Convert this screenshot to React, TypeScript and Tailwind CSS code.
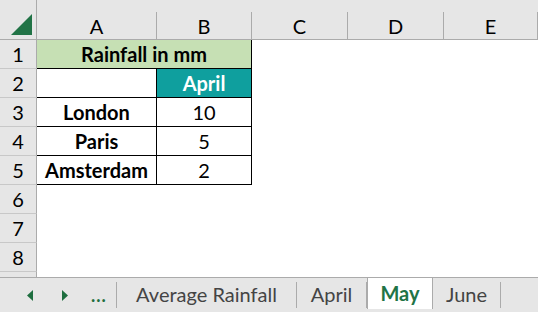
const cols = ["A", "B", "C", "D", "E"];
const colWidths = ["w-[120px]", "w-[95px]", "w-[96px]", "w-[96px]", "flex-1"];

const cities = [
  { name: "London", value: 10 },
  { name: "Paris", value: 5 },
  { name: "Amsterdam", value: 2 },
];

function RowHead({ n }: { n: number }) {
  return (
    <div className="flex h-[29px] w-[37px] shrink-0 items-center justify-center border-r border-b border-r-[#ababab] border-b-[#c8c8c8] bg-[#e6e6e6] text-[20px] text-black">
      {n}
    </div>
  );
}

function Tab({ label, width }: { label: string; width: string }) {
  return (
    <div className={`${width} flex h-full shrink-0 items-center`}>
      <div className="flex-1 pb-[3px] text-center text-[20px] text-[#444]">{label}</div>
      <div className="h-[26px] w-px bg-[#ababab]" />
    </div>
  );
}

export default function App() {
  return (
    <div
      className="flex h-[312px] w-[538px] flex-col overflow-hidden bg-white"
      style={{ fontFamily: "Lato, 'Liberation Sans', sans-serif" }}
    >
      {/* column headers */}
      <div className="flex h-[40px] shrink-0 border-b border-[#ababab] bg-[#e6e6e6]">
        <div className="flex w-[37px] shrink-0 items-end justify-end border-r border-[#ababab] pr-[3px] pb-[3px]">
          <svg width="22" height="22" viewBox="0 0 22 22">
            <polygon points="21,0 21,21 0,21" fill="#217346" />
          </svg>
        </div>
        {cols.map((c, i) => (
          <div key={c} className={`${colWidths[i]} flex shrink-0 pt-[12px]`}>
            <div className="flex flex-1 items-center justify-center border-r border-[#ababab] text-[20px] text-black">
              {c}
            </div>
          </div>
        ))}
      </div>

      {/* rows */}
      <div className="flex flex-1 flex-col">
        <div className="flex">
          <RowHead n={1} />
          <div className="flex h-[29px] w-[215px] items-center justify-center border-r border-b border-black bg-[#c6e0b4] text-[20px] font-bold text-black">
            Rainfall in mm
          </div>
        </div>
        <div className="flex">
          <RowHead n={2} />
          <div className="h-[29px] w-[120px] border-r border-b border-black" />
          <div className="flex h-[29px] w-[95px] items-center justify-center border-r border-b border-black bg-[#0f9f9e] text-[20px] font-bold text-white">
            April
          </div>
        </div>
        {cities.map((c, i) => (
          <div key={c.name} className="flex">
            <RowHead n={i + 3} />
            <div className="flex h-[29px] w-[120px] items-center justify-center border-r border-b border-black text-[20px] font-bold text-black">
              {c.name}
            </div>
            <div className="flex h-[29px] w-[95px] items-center justify-center border-r border-b border-black text-[20px] text-black">
              {c.value}
            </div>
          </div>
        ))}
        {[6, 7, 8].map((n) => (
          <div key={n} className="flex">
            <RowHead n={n} />
          </div>
        ))}
        <div className="flex flex-1">
          <div className="w-[37px] border-r border-[#ababab] bg-[#e6e6e6]" />
        </div>
      </div>

      {/* sheet tabs */}
      <div className="flex h-[35px] shrink-0 items-center border-t border-[#ababab] bg-[#e6e6e6]">
        <div className="flex h-full w-[117px] shrink-0 items-center">
          <div className="flex w-[116px] items-center pl-[27px]">
            <svg width="7" height="11" viewBox="0 0 7 11">
              <polygon points="6,0 6,11 0,5.5" fill="#1e6e3f" />
            </svg>
            <svg width="7" height="11" viewBox="0 0 7 11" className="ml-[28px]">
              <polygon points="0,0 0,11 6,5.5" fill="#1e6e3f" />
            </svg>
            <span className="ml-[22px] text-[18px] leading-none font-bold tracking-[1px] text-[#1e6e3f]">
              ...
            </span>
          </div>
          <div className="h-[26px] w-px bg-[#ababab]" />
        </div>
        <Tab label="Average Rainfall" width="w-[180px]" />
        <Tab label="April" width="w-[70px]" />
        <div className="flex h-[31px] w-[66px] shrink-0 flex-col self-start border-x border-[#ababab] bg-white">
          <div className="flex flex-1 items-center justify-center pb-[1px] text-[20px] font-bold text-[#217346]">
            May
          </div>
          <div className="h-[2px] bg-[#217346]" />
        </div>
        <Tab label="June" width="w-[68px]" />
      </div>
    </div>
  );
}
